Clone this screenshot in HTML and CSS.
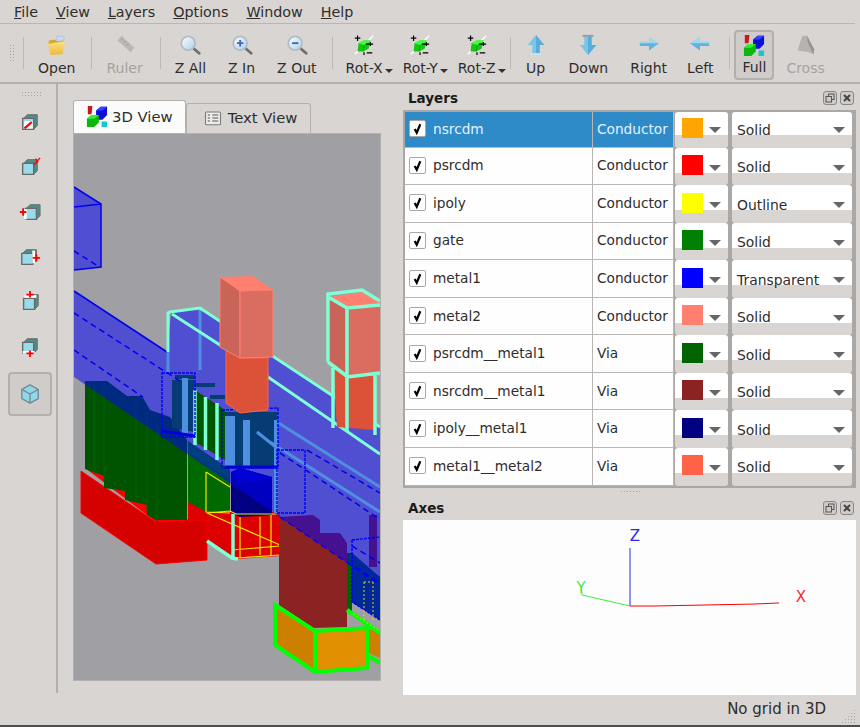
FILE: index.html
```html
<!DOCTYPE html>
<html lang="en">
<head>
<meta charset="utf-8">
<title>3D View</title>
<link rel="stylesheet" href="styles.css">
</head>
<body>
<svg class="defs" aria-hidden="true">
  <defs>
    <linearGradient id="glass" x1="0" y1="0" x2="1" y2="1"><stop offset="0" stop-color="#ffffff"/><stop offset="1" stop-color="#a9cfe8"/></linearGradient>
    <linearGradient id="folder" x1="0" y1="0" x2="0" y2="1"><stop offset="0" stop-color="#f9e28a"/><stop offset="1" stop-color="#eeb93a"/></linearGradient>
    <symbol id="i-open" viewBox="0 0 24 24">
      <path d="M12 2l8 1-1 10-8-1z" fill="#c8d8f0" stroke="#b4c4dc"/>
      <path d="M3 7l7-1 2 2 7-1 1 2-2 12-12 1-3-11z" fill="#dca82c"/>
      <path d="M2 11l18-3 1 1-3 13-13 1z" fill="url(#folder)"/>
    </symbol>
    <symbol id="i-ruler" viewBox="0 0 24 24">
      <path d="M8 2l14 13-4 5L4 7z" fill="#b9b6b3" stroke="#c9c6c3"/>
      <path d="M8 6l2-1M11 9l2-1M14 12l2-1" stroke="#999" fill="none"/>
    </symbol>
    <symbol id="i-zoom" viewBox="0 0 24 24">
      <path d="M15 15l7 6" stroke="#6e6e6e" stroke-width="3" stroke-linecap="round"/>
      <circle cx="10" cy="10" r="7.5" fill="url(#glass)" stroke="#b3bcc4" stroke-width="2"/>
    </symbol>
    <symbol id="i-zin" viewBox="0 0 24 24">
      <path d="M15 15l7 6" stroke="#6e6e6e" stroke-width="3" stroke-linecap="round"/>
      <circle cx="10" cy="10" r="7.5" fill="url(#glass)" stroke="#b3bcc4" stroke-width="2"/>
      <path d="M6.5 10h7M10 6.5v7" stroke="#3f68b8" stroke-width="2"/>
    </symbol>
    <symbol id="i-zout" viewBox="0 0 24 24">
      <path d="M15 15l7 6" stroke="#6e6e6e" stroke-width="3" stroke-linecap="round"/>
      <circle cx="10" cy="10" r="7.5" fill="url(#glass)" stroke="#b3bcc4" stroke-width="2"/>
      <path d="M6.5 10h7" stroke="#3f68b8" stroke-width="2"/>
    </symbol>
    <symbol id="i-rot" viewBox="0 0 24 24">
      <path d="M2 22L22 2" stroke="#fff" stroke-width="1.5"/>
      <path d="M6 10l6-3h7l-2 9-6 3H5z" fill="#12c912"/>
      <path d="M6 10l6-3h7l-1 2-6 3z" fill="#3dff3d"/>
      <path d="M12 12l-1 7" stroke="#0a9a0a"/>
      <path d="M2 4.500h6M5 1.500v6M12 20v3M15 20.500h6M14 11h8M19 9v4" stroke="#000" stroke-width="1.300"/>
    </symbol>
    <symbol id="i-up" viewBox="0 0 24 24"><path d="M12 1l9 11h-5v9H8v-9H3z" fill="#79c6e6"/><path d="M12 1l9 11h-5v9h-4z" fill="#58aedb"/><path d="M6 22h12" stroke="#cfe2ea" stroke-width="2"/></symbol>
    <symbol id="i-down" viewBox="0 0 24 24"><path d="M12 23l9-11h-5V3H8v9H3z" fill="#79c6e6"/><path d="M12 23l9-11h-5V3h-4z" fill="#58aedb"/><path d="M6 2h12" stroke="#8a9aa6" stroke-width="2"/></symbol>
    <symbol id="i-right" viewBox="0 0 24 24"><path d="M23 10L12 3v5H2v5h10v5z" fill="#9ed8ee"/><path d="M23 10L12 18v-5H2v-3z" fill="#62b4de"/></symbol>
    <symbol id="i-left" viewBox="0 0 24 24"><path d="M1 10l11-7v5h10v5H12v5z" fill="#9ed8ee"/><path d="M1 10l11 8v-5h10v-3z" fill="#62b4de"/></symbol>
    <symbol id="i-full" viewBox="0 0 24 24">
      <path d="M2 1h5l-1 9H2z" fill="#c81818"/>
      <path d="M11 6l5-4h7v9l-5 5h-7z" fill="#0a10d8"/><path d="M11 6l5-4h7l-5 4z" fill="#3a40ff"/>
      <path d="M1 15l5-4h8v8l-5 5H1z" fill="#0cb80c"/><path d="M1 15l5-4h8l-5 4z" fill="#30f030"/>
      <rect x="17" y="18" width="6" height="6" fill="#14c8d0"/>
    </symbol>
    <symbol id="i-cross" viewBox="0 0 24 24"><path d="M8 2h5l8 15-1 5-5-2-12-2 2-7z" fill="#b5b2af"/><path d="M13 2l8 15-1 5-6-13z" fill="#959290"/></symbol>
    <symbol id="i-text" viewBox="0 0 24 24">
      <rect x="2" y="4" width="20" height="17" rx="1.500" fill="#eeeceb" stroke="#7d7b79" stroke-width="1.500"/>
      <path d="M5 8h3M5 12h3M5 16h3M11 8h8M11 12h8M11 16h8" stroke="#555" stroke-width="1.500"/>
    </symbol>
    <symbol id="i-float" viewBox="0 0 14 14">
      <rect x=".5" y=".5" width="13" height="13" rx="2.500" fill="#cfcbc8" stroke="#8a8886"/>
      <rect x="5.500" y="3" width="5.500" height="5.500" fill="none" stroke="#555"/><rect x="3" y="5.500" width="5.500" height="5.500" fill="#cfcbc8" stroke="#555"/>
    </symbol>
    <symbol id="i-close" viewBox="0 0 14 14">
      <rect x=".5" y=".5" width="13" height="13" rx="2.500" fill="#cfcbc8" stroke="#8a8886"/>
      <path d="M4 4l6 6M10 4l-6 6" stroke="#444" stroke-width="2"/>
    </symbol>
    <symbol id="i-check" viewBox="0 0 16 16"><path d="M5 8.500l2.200 4L11 3.500" fill="none" stroke="#000" stroke-width="2.400"/></symbol>
    <symbol id="cube" viewBox="0 0 24 24">
      <path d="M5 8l4-4h11v12l-4 4z" fill="#4f8d88" stroke="#6a6a6a"/>
      <path d="M4 8h12v12H4z" fill="#98dbea" stroke="#6a6a6a" stroke-width="1.500"/>
    </symbol>
  </defs>
</svg>

<div class="window">
  <nav class="menubar">
    <span class="menu"><u>F</u>ile</span>
    <span class="menu"><u>V</u>iew</span>
    <span class="menu"><u>L</u>ayers</span>
    <span class="menu"><u>O</u>ptions</span>
    <span class="menu"><u>W</u>indow</span>
    <span class="menu"><u>H</u>elp</span>
  </nav>

  <div class="toolbar">
    <span class="grip-v"></span>
    <span class="sep"></span>
    <button class="tool gap1"><svg class="tool-icon"><use href="#i-open"/></svg><span>Open</span></button>
    <span class="sep"></span>
    <button class="tool off gap2"><svg class="tool-icon"><use href="#i-ruler"/></svg><span>Ruler</span></button>
    <span class="sep"></span>
    <button class="tool"><svg class="tool-icon"><use href="#i-zoom"/></svg><span>Z All</span></button>
    <button class="tool"><svg class="tool-icon"><use href="#i-zin"/></svg><span>Z In</span></button>
    <button class="tool"><svg class="tool-icon"><use href="#i-zout"/></svg><span>Z Out</span></button>
    <span class="sep"></span>
    <button class="tool drop"><svg class="tool-icon"><use href="#i-rot"/></svg><span>Rot-X</span></button>
    <button class="tool drop"><svg class="tool-icon"><use href="#i-rot"/></svg><span>Rot-Y</span></button>
    <button class="tool drop"><svg class="tool-icon"><use href="#i-rot"/></svg><span>Rot-Z</span></button>
    <span class="sep tight"></span>
    <button class="tool"><svg class="tool-icon"><use href="#i-up"/></svg><span>Up</span></button>
    <button class="tool"><svg class="tool-icon"><use href="#i-down"/></svg><span>Down</span></button>
    <button class="tool"><svg class="tool-icon"><use href="#i-right"/></svg><span>Right</span></button>
    <button class="tool nudge"><svg class="tool-icon"><use href="#i-left"/></svg><span>Left</span></button>
    <span class="sep"></span>
    <button class="tool on"><svg class="tool-icon"><use href="#i-full"/></svg><span>Full</span></button>
    <button class="tool off"><svg class="tool-icon"><use href="#i-cross"/></svg><span>Cross</span></button>
  </div>

  <div class="main">
    <aside class="sidebar">
      <span class="grip-h"></span>
      <button class="side-btn"><svg class="side-icon" viewBox="0 0 24 24"><use href="#cube"/><path d="M6 11h9v8H5z" fill="#fff"/><path d="M6 19l8-7" stroke="#f00" stroke-width="2.500"/></svg></button>
      <button class="side-btn"><svg class="side-icon" viewBox="0 0 24 24"><use href="#cube"/><path d="M16 10l7-8M18 3l3 4" stroke="#f00" stroke-width="1.500" fill="none"/></svg></button>
      <button class="side-btn"><svg class="side-icon" viewBox="0 0 24 24"><use href="#cube" x="3"/><path d="M7 9v11" stroke="#fff" stroke-width="3"/><path d="M1 12h7M4.500 8v8" stroke="#f00" stroke-width="2"/></svg></button>
      <button class="side-btn"><svg class="side-icon" viewBox="0 0 24 24"><use href="#cube" x="-1"/><path d="M16 5v14" stroke="#fff" stroke-width="3"/><path d="M15 13h8M19 9v8" stroke="#f00" stroke-width="2"/></svg></button>
      <button class="side-btn"><svg class="side-icon" viewBox="0 0 24 24"><use href="#cube" x="1"/><path d="M6 6h13" stroke="#fff" stroke-width="3"/><path d="M8 4h8M12 0v7" stroke="#f00" stroke-width="2"/></svg></button>
      <button class="side-btn"><svg class="side-icon" viewBox="0 0 24 24"><use href="#cube"/><path d="M4 19h13" stroke="#fff" stroke-width="3"/><path d="M8 20h8M12 17v7" stroke="#f00" stroke-width="2"/></svg></button>
      <button class="side-btn active"><svg class="side-icon" viewBox="0 0 24 24">
        <path d="M12 2l9 5v10l-9 5-9-5V7z" fill="#8ed8ec" stroke="#7b8a90" stroke-width="1.500"/>
        <path d="M3 7l9 5 9-5M12 12v10" fill="none" stroke="#7b8a90" stroke-width="1.500"/>
      </svg></button>
    </aside>

    <section class="center">
      <div class="tabs">
        <div class="tab current"><svg class="tab-icon-lg"><use href="#i-full"/></svg>3D View</div>
        <div class="tab"><svg class="tab-icon"><use href="#i-text"/></svg>Text View</div>
      </div>
      <div class="pane">
        <svg class="scene" viewBox="74 134 306 546" width="306" height="546">
          <!-- psrcdm -->
          <path d="M85 468L156 522l31-2V490L85 445z" fill="#ff0000"/>
          <path d="M81 471l75 51 31-2h20v40l-51 4-75-51z" fill="#d50000" stroke="#ff0000"/>
          <path d="M188 502l42 10h50v44l-43 3-30-19v-20l-19 0z" fill="#dc0000"/>

          <!-- gate -->
          <path d="M188 441l42 29v42h-23l-19-10z" fill="#006a00"/>
          <path d="M188 441l42 29v10l-42-27z" fill="#007c00"/>
          <path d="M347 553h5v58h-5z" fill="#006400"/>

          <!-- psrcdm__metal1 -->
          <path d="M85 381h22l20 15h15l8 14 20 7 17 23v80h-31l-9-5v-10l-22-5v-9l-21-3v-12l-19-7z" fill="#005400"/>
          <path d="M94 381v92M104 382v100M136 400v98M147 412v100M157 420v102" stroke="#006400" fill="none"/>

          <!-- ipoly__metal1 -->
          <path d="M231 472l9-4 32 9v38l-32 2-9-5z" fill="#000080"/>
          <path d="M231 472l9-4 32 9-10 4-22 0z" fill="#0000a8"/>

          <!-- ipoly outlines -->
          <path d="M206 472v40l24 1M206 472l24 15M207 513l73 32M232 550l48-4M237 558l43-3M240 517v41M260 517v38M271 515v41M207 513l23-2 6 3h44" fill="none" stroke="#f4e400" stroke-width="1.200"/>
          <path d="M207 541l25 17 6 1M233 514v44" fill="none" stroke="#7fffd4" stroke-width="3.500"/>

          <!-- nsrcdm -->
          <path d="M287 613h18v15l-18-5z" fill="#ffa500"/>
          <path d="M367 628l13 6v24l-13-6z" fill="#cc7f00"/>
          <path d="M275 605v40l40 27v-43z" fill="#cc7f00"/>
          <path d="M315 629v43l52-4v-40z" fill="#e09000"/>

          <!-- nsrcdm__metal1 -->
          <path d="M279 517l34-2 7 5v13h20l7 10v84l-34 1-34-23z" fill="#8b2323"/>
          <path d="M369 515h8v52h-8z" fill="#8b2323"/>
          <path d="M352 553l28 24v43l-28-18z" fill="#005030"/>

          <!-- metal1 -->
          <path class="metal" d="M74 187l27 17v63l-27 3zM74 291l306 199v95L74 377zM171 313l29-5 180 119v63L167 352zM162 373l33-2v66h-33zM222 410l56-2v62l-56 2zM277 450h28v63h-28zM352 540l28-3v83l-28-18z"/>

          <!-- vias and fins seen through metal1 -->
          <path d="M172 380h22v52l-22-4zM225 412h52v55h-52z" fill="#063c74"/>
          <path d="M175 377h20M193 385h22M210 397h15M242 420h33M245 427h30" stroke="#063c74" stroke-width="4" fill="none"/>
          <path d="M182 378h6v56h-6zM225 416h10v50h-10zM243 420h7v47h-7zM274 420h4v93h-4z" fill="#4f8fe0"/>
          <path d="M277 422l103 65M270 442l110 70M168 352v20M200 308v62M257 432l20 16" stroke="#4f8fe0" stroke-width="3" fill="none"/>
          <path d="M195 390l30 20v50l-30-18z" fill="#005500"/>
          <path d="M195 390v55M205.500 397v53M217 403v57" stroke="#7fffd4" stroke-width="3.500" fill="none"/>

          <path d="M74 187l27 17v63l-27 3M74 207l27-3M167 352l-93-61" fill="none" stroke="#0000ee" stroke-width="1.500"/>
          <path d="M74 251l24 15M74 313l109 70M74 350l69 47M307 450l73 43M280 453l98 65M280 517l100 68M352 546l28 17M356 567l24 16" fill="none" stroke="#0000ee" stroke-width="1.500" stroke-dasharray="6 4"/>
          <path d="M162 373h33v64H162zM222 410l56-2v60h-56zM277 450h28v63h-28zM352 540l28-3M352 540v62l28 18" fill="none" stroke="#0000ee" stroke-width="1.400" stroke-dasharray="3 1"/>
          <path d="M162 431l33 5M225 467h52" stroke="#0000dd" stroke-width="3" fill="none"/>

          <!-- bright top-level outlines -->
          <path d="M168 352V313l2-1 30-4 180 119M172 314l96 62M268 377l112 77" fill="none" stroke="#7fffd4" stroke-width="3"/>

          <!-- metal2 -->
          <path d="M226 350l14 8h28v52l-28 3-14-10z" fill="#dc5238" stroke="#ff6347"/>
          <path d="M220 277l33-1 20 14-33 1z" fill="#ff8070"/>
          <path d="M220 277l20 14v67l-20-11z" fill="#c86458" stroke="#ff8070"/>
          <path d="M240 291l33-1v67l-33 1z" fill="#da6c60" stroke="#ff8070"/>

          <path d="M333 368l14 9 28-4v57l-38-3z" fill="#dc5238"/>
          <path d="M329 297l33-5 18 11-33 5z" fill="#ff8070"/>
          <path d="M328 297l19 11v67l-19-13z" fill="#c86458"/>
          <path d="M347 308l33-3v68l-33 3z" fill="#da6c60"/>
          <path d="M328 362V294l34-4 18 11M328 297l19 11 33-3M347 308v69l33-4M328 362l20 15M333 368v60M375 375v60M347 377v55" fill="none" stroke="#7fffd4" stroke-width="3.500"/>

          <!-- nsrcdm outlines -->
          <path d="M275 605v40l40 27 52-4v-40l-52 3zM315 629v43M347 610l33 23M367 655l13 8" fill="none" stroke="#00ff00" stroke-width="4"/>
          <path d="M364 582v38M373 582v38M364 582h9M353 614l25 16" fill="none" stroke="#e6d800" stroke-dasharray="2 2"/>
        </svg>
      </div>
    </section>

    <section class="dock">
      <header class="dock-title"><span>Layers</span><span class="dock-btns"><svg class="dock-btn"><use href="#i-float"/></svg><svg class="dock-btn"><use href="#i-close"/></svg></span></header>
      <div class="layers">
        <div class="row selected">
          <div class="cell name"><span class="check"><svg><use href="#i-check"/></svg></span>nsrcdm</div>
          <div class="cell kind">Conductor</div>
          <div class="cell color"><span class="combo"><i class="swatch orange"></i><b class="arrow"></b></span></div>
          <div class="cell style"><span class="combo">Solid<b class="arrow"></b></span></div>
        </div>
        <div class="row">
          <div class="cell name"><span class="check"><svg><use href="#i-check"/></svg></span>psrcdm</div>
          <div class="cell kind">Conductor</div>
          <div class="cell color"><span class="combo"><i class="swatch red"></i><b class="arrow"></b></span></div>
          <div class="cell style"><span class="combo">Solid<b class="arrow"></b></span></div>
        </div>
        <div class="row">
          <div class="cell name"><span class="check"><svg><use href="#i-check"/></svg></span>ipoly</div>
          <div class="cell kind">Conductor</div>
          <div class="cell color"><span class="combo"><i class="swatch yellow"></i><b class="arrow"></b></span></div>
          <div class="cell style"><span class="combo">Outline<b class="arrow"></b></span></div>
        </div>
        <div class="row">
          <div class="cell name"><span class="check"><svg><use href="#i-check"/></svg></span>gate</div>
          <div class="cell kind">Conductor</div>
          <div class="cell color"><span class="combo"><i class="swatch green"></i><b class="arrow"></b></span></div>
          <div class="cell style"><span class="combo">Solid<b class="arrow"></b></span></div>
        </div>
        <div class="row">
          <div class="cell name"><span class="check"><svg><use href="#i-check"/></svg></span>metal1</div>
          <div class="cell kind">Conductor</div>
          <div class="cell color"><span class="combo"><i class="swatch blue"></i><b class="arrow"></b></span></div>
          <div class="cell style"><span class="combo">Transparent<b class="arrow"></b></span></div>
        </div>
        <div class="row">
          <div class="cell name"><span class="check"><svg><use href="#i-check"/></svg></span>metal2</div>
          <div class="cell kind">Conductor</div>
          <div class="cell color"><span class="combo"><i class="swatch salmon"></i><b class="arrow"></b></span></div>
          <div class="cell style"><span class="combo">Solid<b class="arrow"></b></span></div>
        </div>
        <div class="row">
          <div class="cell name"><span class="check"><svg><use href="#i-check"/></svg></span>psrcdm__metal1</div>
          <div class="cell kind via">Via</div>
          <div class="cell color"><span class="combo"><i class="swatch darkgreen"></i><b class="arrow"></b></span></div>
          <div class="cell style"><span class="combo">Solid<b class="arrow"></b></span></div>
        </div>
        <div class="row">
          <div class="cell name"><span class="check"><svg><use href="#i-check"/></svg></span>nsrcdm__metal1</div>
          <div class="cell kind via">Via</div>
          <div class="cell color"><span class="combo"><i class="swatch brown"></i><b class="arrow"></b></span></div>
          <div class="cell style"><span class="combo">Solid<b class="arrow"></b></span></div>
        </div>
        <div class="row">
          <div class="cell name"><span class="check"><svg><use href="#i-check"/></svg></span>ipoly__metal1</div>
          <div class="cell kind via">Via</div>
          <div class="cell color"><span class="combo"><i class="swatch navy"></i><b class="arrow"></b></span></div>
          <div class="cell style"><span class="combo">Solid<b class="arrow"></b></span></div>
        </div>
        <div class="row">
          <div class="cell name"><span class="check"><svg><use href="#i-check"/></svg></span>metal1__metal2</div>
          <div class="cell kind via">Via</div>
          <div class="cell color"><span class="combo"><i class="swatch tomato"></i><b class="arrow"></b></span></div>
          <div class="cell style"><span class="combo">Solid<b class="arrow"></b></span></div>
        </div>
      </div>
      <div class="splitter"><span class="grip-s"></span></div>
      <header class="dock-title axes-title"><span>Axes</span><span class="dock-btns"><svg class="dock-btn"><use href="#i-float"/></svg><svg class="dock-btn"><use href="#i-close"/></svg></span></header>
      <svg class="axes" viewBox="403 520 453 175" width="453" height="175">
        <path d="M630 606H655l50-1 50-1 24-1" fill="none" stroke="#f00"/>
        <path d="M630 606V548" fill="none" stroke="#2a2af0"/>
        <path d="M630 606l-48-11-1-8" fill="none" stroke="#3cf03c"/>
        <text x="635" y="541" class="ax ax-z" text-anchor="middle">Z</text>
        <text x="581" y="593" class="ax ax-y" text-anchor="middle">Y</text>
        <text x="801" y="602" class="ax ax-x" text-anchor="middle">X</text>
      </svg>
    </section>
  </div>

  <footer class="status"><span>No grid in 3D</span><span class="grip-r"></span></footer>
</div>
</body>
</html>
```

FILE: styles.css
```css
* { box-sizing: border-box; }

html, body {
  margin: 0;
  padding: 0;
  background: #d9d5d2;
}

body {
  font-family: "DejaVu Sans", sans-serif;
  font-size: 13.7px;
  color: #2e2d2c;
  overflow: hidden;
}

.defs {
  position: absolute;
  width: 0;
  height: 0;
}

.window {
  width: 860px;
  height: 727px;
  display: flex;
  flex-direction: column;
  border-bottom: 2px solid #4e4d4c;
}

/* menu */
.menubar {
  height: 24px;
  flex: none;
  display: flex;
  align-items: center;
  gap: 18px;
  padding: 0 0 0 14px;
  margin-right: 5px;
  font-size: 14.300px;
  border-bottom: 1px solid #b9b6b3;
}

/* main toolbar */
.toolbar {
  height: 60px;
  flex: none;
  display: flex;
  align-items: stretch;
  padding-left: 9px;
  border-bottom: 2px solid #b3b0ae;
  font-size: 14px;
}

.grip-v {
  width: 7px;
  margin: 20px 7px 20px 0;
  background: radial-gradient(circle, #a8a5a2 0.7px, transparent 1px) 0 0 / 3px 3px;
}

.sep {
  width: 1px;
  margin: 13px 3px 13px 4px;
  background: #bcb9b6;
}

.sep.tight { margin-left: 0; }

.grip-v + .sep { margin-left: 0; }

.tool {
  border: 1px solid transparent;
  background: none;
  font: inherit;
  color: inherit;
  padding: 0 10px;
  margin: 6px 0 3px;
  height: 50px;
  display: flex;
  flex-direction: column;
  align-items: center;
  position: relative;
}

.tool.nudge { margin-left: -2px; margin-right: 1px; }
.tool.gap1 { margin-right: 1px; }
.tool.gap2 { margin-right: 2px; }

.tool-icon {
  width: 22px;
  height: 22px;
  margin-top: 3px;
  flex: none;
}

.tool span {
  line-height: 16px;
  margin-top: 4px;
  white-space: nowrap;
}

.tool.off { color: #a5a3a0; }

.tool.on {
  background: #cfccc9;
  border: 2px solid #b2afac;
  border-radius: 4px;
  padding: 0 6px;
  margin: 6px 1px 3px 1px;
}

.tool.on .tool-icon { margin-top: 2px; }
.tool.on span { margin-top: 3px; }

.tool.drop {
  padding-right: 13px;
  padding-left: 5px;
}

.sep + .tool.drop { padding-left: 9px; }

.tool.drop::after {
  content: "";
  position: absolute;
  right: 3px;
  bottom: 6px;
  border: 4px solid transparent;
  border-top-color: #333;
  border-bottom: 0;
}

/* main area */
.main {
  flex: 1;
  min-height: 0;
  display: flex;
}

.sidebar {
  width: 58px;
  flex: none;
  border-right: 2px solid #b3b0ae;
  margin-bottom: 32px;
  padding: 7px 4px 0 8px;
  display: flex;
  flex-direction: column;
  align-items: stretch;
}

.grip-h {
  width: 22px;
  height: 6px;
  margin: 0 0 3px 13px;
  flex: none;
  background: radial-gradient(circle, #a8a5a2 0.7px, transparent 1px) 0 0 / 3px 3px;
}

.side-btn {
  height: 44.800px;
  flex: none;
  border: 2px solid transparent;
  background: none;
  padding: 0;
  display: flex;
  align-items: center;
  justify-content: center;
}

.side-btn.active {
  background: #cfccc9;
  border-color: #b2afac;
  border-radius: 4px;
  height: 44px;
  margin-top: 3px;
}

.side-icon {
  width: 22px;
  height: 22px;
  overflow: visible;
}

/* tabs */
.center {
  width: 346px;
  flex: none;
  padding: 16px 0 0 15px;
}

.tabs {
  display: flex;
  align-items: flex-end;
  height: 33px;
  font-size: 14.800px;
}

.tab {
  height: 30px;
  padding: 0 13px 2px 17px;
  display: flex;
  align-items: center;
  background: #d9d5d2;
  border: 1px solid #b3b0ae;
  border-bottom: 0;
  border-radius: 3px 3px 0 0;
  white-space: nowrap;
}

.tab.current {
  height: 33px;
  background: #fcfbfb;
  padding: 0 12px 2px 12px;
}

.tab-icon { width: 18px; height: 18px; margin-right: 6px; }
.tab-icon-lg { width: 22px; height: 22px; margin-right: 4px; }

.pane {
  width: 308px;
  height: 548px;
  border: 1px solid #b3b0ae;
  background: #a09fa3;
}

.scene { display: block; }

.metal {
  fill: #0000ff;
  fill-opacity: 0.5;
}

/* docks */
.dock {
  flex: 1;
  min-width: 0;
  padding-right: 4px;
  margin-left: -1px;
}

.dock-title {
  height: 26px;
  display: flex;
  align-items: center;
  justify-content: space-between;
  padding: 2px 2px 0 5px;
  font-weight: bold;
  font-size: 13.500px;
  color: #1c1b1b;
}

.dock-btns { display: flex; gap: 3px; }
.dock-btn { width: 14px; height: 14px; display: block; }

.layers {
  height: 378px;
  border: 2px solid #aaa7a5;
  background: #d9d5d2;
}

.row {
  display: grid;
  grid-template-columns: 188px 81px 57px 1fr;
  height: 37.550px;
}

.row.selected { height: 35.600px; }

.cell {
  display: flex;
  align-items: center;
  background: #fefefe;
  border-bottom: 1px solid #b9b6b4;
  border-right: 1px solid #b9b6b4;
  padding-bottom: 1px;
  white-space: nowrap;
}

.name { padding-left: 4px; }
.kind { padding-left: 4px; }

.selected .name,
.selected .kind {
  background: #2e8bc8;
  color: #e2f2fb;
}

.check {
  width: 17px;
  height: 17px;
  flex: none;
  margin-right: 7px;
  background: #fff;
  border: 1px solid #aaa7a5;
  border-radius: 2px;
  display: flex;
}

.check svg { width: 15px; height: 15px; display: block; }

.color,
.style {
  background: #aaa7a5;
  padding: 0;
  align-items: stretch;
  border: 0;
}

.combo {
  flex: 1;
  height: 100%;
  border-radius: 3px;
  position: relative;
  padding: 10.500px 0 0 5px;
  line-height: 18px;
  font-size: 13.900px;
  background: linear-gradient(#ffffff 0 25px, #d9d5d2 25px);
  display: block;
  margin: 0 2px 1px 1px;
}

.color .combo { margin-right: 3px; }

.selected .combo {
  padding-top: 8.500px;
  background: linear-gradient(#ffffff 0 23px, #d9d5d2 23px);
}

.swatch {
  display: block;
  width: 21px;
  height: 20px;
  margin: -3px 0 0 1.500px;
}

.orange { background: #ffa500; }
.red { background: #ff0000; }
.yellow { background: #ffff00; }
.green { background: #008000; }
.blue { background: #0000ff; }
.salmon { background: #ff8070; }
.darkgreen { background: #006400; }
.brown { background: #8b2323; }
.navy { background: #000080; }
.tomato { background: #ff6347; }

.arrow {
  position: absolute;
  right: 7px;
  top: 17px;
  border: 6px solid transparent;
  border-top-color: #666;
  border-bottom: 0;
}

.selected .arrow { top: 15px; }

.splitter {
  height: 6px;
  display: flex;
  justify-content: center;
  align-items: center;
}

.grip-s {
  width: 20px;
  height: 3px;
  background: radial-gradient(circle, #a8a5a2 0.7px, transparent 1px) 0 0 / 3px 3px;
}

.axes-title { height: 26px; }

.axes {
  display: block;
  background: #fdfdfd;
}

.ax { font-size: 15px; font-family: "DejaVu Sans", sans-serif; }
.ax-z { fill: #2a2af0; }
.ax-y { fill: #3cf03c; }
.ax-x { fill: #f03030; }

/* status bar */
.status {
  position: absolute;
  left: 0;
  top: 694px;
  width: 860px;
  height: 30px;
  display: flex;
  justify-content: flex-end;
  align-items: center;
  padding-right: 4px;
  font-size: 15px;
}

.grip-r {
  width: 15px;
  height: 15px;
  margin: 14px 0 0 15px;
  background: radial-gradient(circle, #a8a5a2 0.7px, transparent 1px) 0 0 / 3px 3px;
  clip-path: polygon(100% 0, 100% 100%, 0 100%);
}
```
